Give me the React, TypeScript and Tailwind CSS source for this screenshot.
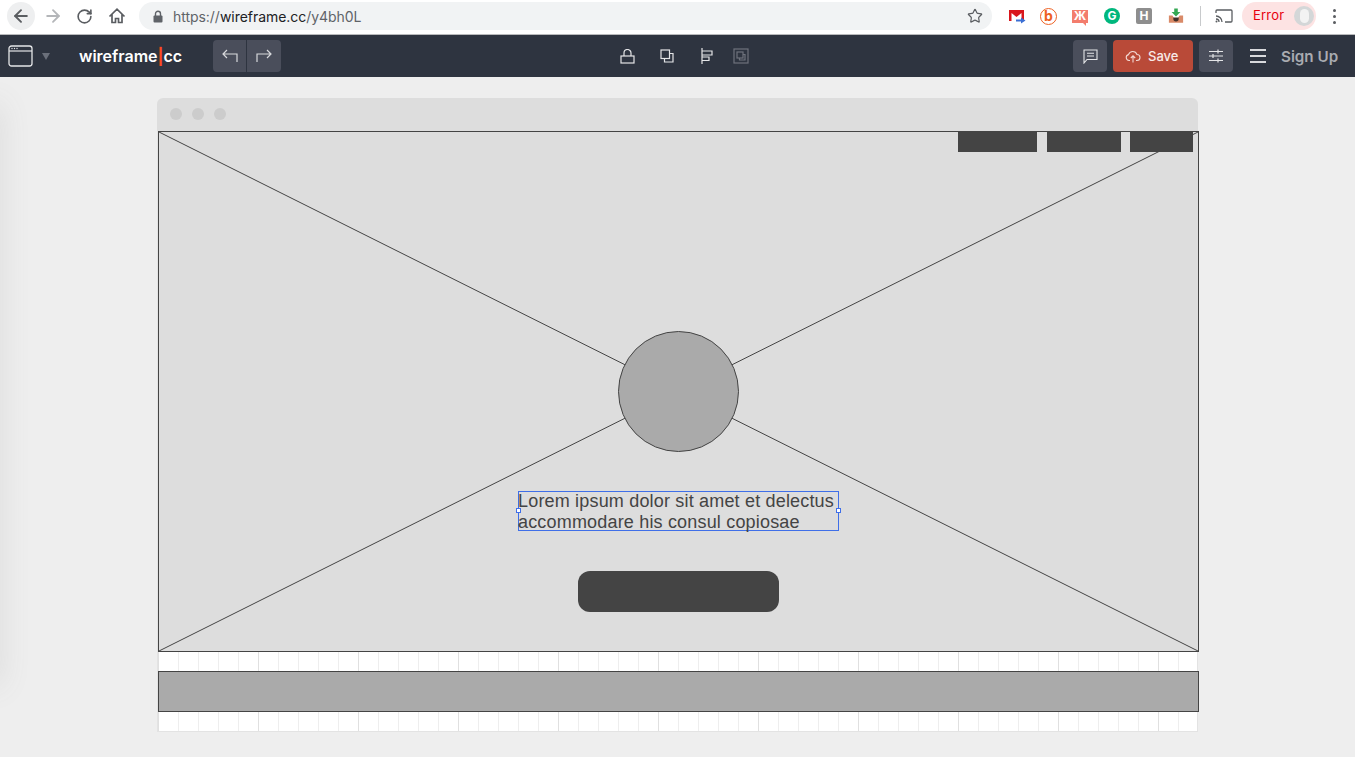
// App.tsx
import React from "react";
import { ArrowLeft, ArrowRight, RotateCw, Star } from "lucide-react";

const Divider = () => <div className="h-[20px] w-px bg-[#c8cacc]" />;

// 크롬 확장 아이콘
const ExtensionIcons = () => (
    <div className="flex items-center">
        <svg width="17" height="15" viewBox="0 0 17 15" className="ml-[17px]">
            <path d="M0 1h15v11H0z" fill="#d9161c" />
            <path d="M2.500 4l5 4 5-4v8h-10z" fill="#fff" />
            <path d="M7 10.500h5V8.500l4.500 3-4.500 3v-2H7z" fill="#3b6fd4" />
        </svg>
        <div className="ml-[14px] w-[17px] h-[17px] rounded-full border-[1.5px] border-[#ee6123] flex items-center justify-center text-[#ee6123] text-[14px] font-bold leading-none font-['Inter',sans-serif]">
            b
        </div>
        <div className="ml-[15px] w-[16px] h-[13px] bg-[#f37d6d] flex items-center justify-center text-white text-[12px] font-bold leading-none font-['Noto_Sans',sans-serif] relative">
            Ж
            <span className="absolute right-[2px] -bottom-[3px] w-0 h-0 border-l-[3px] border-l-transparent border-t-[3px] border-t-[#f37d6d]" />
        </div>
        <div className="ml-[16px] w-[16px] h-[16px] rounded-full bg-[#00b77d] flex items-center justify-center text-white text-[12px] font-bold leading-none font-['Inter',sans-serif]">
            G
        </div>
        <div className="ml-[16px] w-[16px] h-[16px] rounded-[2px] bg-[#8e8e8e] flex items-center justify-center text-white text-[12px] font-bold leading-none font-['Inter',sans-serif]">
            H
        </div>
        <svg width="16" height="17" viewBox="0 0 18 18" className="ml-[16px]">
            <path d="M7 0h4v4h3l-5 5-5-5h3z" fill="#34a853" />
            <path d="M1 8h4l2 3h4l2-3h4v8H1z" fill="#d98a68" />
            <path d="M6 10h6v1.500a3 3 0 0 1-6 0z" fill="#40302a" />
        </svg>
    </div>
);

const ChromeBar = () => (
    <div className="h-[35px] pb-[2px] bg-white border-b border-[#b9babc] flex items-center shrink-0 relative">
        <div className="ml-[7px] w-[28px] h-[28px] rounded-full bg-[#eeeff0] flex items-center justify-center">
            <ArrowLeft size={20} strokeWidth={2.3} className="text-[#5a5d61]" />
        </div>
        <ArrowRight size={20} strokeWidth={2.2} className="ml-[8px] text-[#b4b6b9]" />
        <RotateCw size={17} strokeWidth={2.3} className="ml-[13px] text-[#5a5d61]" />
        <svg width="18" height="18" viewBox="0 0 18 18" className="ml-[15px]">
            <path
                d="M1.500 9.500 9 2.200l7.500 7.300M4 7.500V15.500h3.500v-4h3v4H14V7.500"
                fill="none"
                stroke="#5a5d61"
                strokeWidth="1.700"
            />
        </svg>
        <div className="ml-[13px] w-[853px] h-[28px] rounded-full bg-[#f1f3f4] flex items-center pl-[14px] pr-[9px]">
            <svg width="10" height="13" viewBox="0 0 10 13">
                <path d="M2.500 6V3.800a2.500 2.500 0 0 1 5 0V6" fill="none" stroke="#5f6368" strokeWidth="1.400" />
                <rect x="0.500" y="5.500" width="9" height="7" rx="1" fill="#5f6368" />
            </svg>
            <span className="ml-[10px] text-[14px] tracking-[-0.04px] text-[#5f6368] font-['Inter',sans-serif]">
                https://<span className="text-[#202124]">wireframe.cc</span>/y4bh0L
            </span>
            <Star size={16} strokeWidth={1.8} className="ml-auto text-[#5a5d61]" />
        </div>
        <ExtensionIcons />
        <div className="ml-[16px]">
            <Divider />
        </div>
        <svg width="18" height="14" viewBox="0 0 18 14" className="ml-[14px]">
            <path
                d="M1 4V2a1 1 0 0 1 1-1h14a1 1 0 0 1 1 1v10a1 1 0 0 1-1 1h-6M1 7a6 6 0 0 1 6 6M1 10a3 3 0 0 1 3 3"
                fill="none"
                stroke="#5a5d61"
                strokeWidth="1.300"
            />
            <circle cx="1.500" cy="12.500" r="1" fill="#5a5d61" />
        </svg>
        <div className="ml-[9px] w-[74px] h-[28px] rounded-full bg-[#fde3e3] flex items-center pl-[11px]">
            <span className="text-[13px] tracking-[0.2px] text-[#e8000d] font-['Inter',sans-serif]">Error</span>
            <div className="ml-[10px] w-[20px] h-[20px] rounded-full bg-[#d4d7d8] flex items-center justify-center">
                <div className="w-[9px] h-[14px] rounded-full bg-[#f3f3f3]" />
            </div>
        </div>
        <div className="ml-[17px] flex flex-col gap-[3px]">
            <span className="w-[3px] h-[3px] rounded-full bg-[#5a5d61]" />
            <span className="w-[3px] h-[3px] rounded-full bg-[#5a5d61]" />
            <span className="w-[3px] h-[3px] rounded-full bg-[#5a5d61]" />
        </div>
    </div>
);

const Toolbar = () => (
    <div className="h-[42px] bg-[#2e3440] flex items-center shrink-0 font-['Inter',sans-serif]">
        <svg width="25" height="22" viewBox="0 0 25 22" className="ml-[8px]">
            <rect x="1" y="1" width="23" height="20" rx="2.500" fill="none" stroke="#e4e5e7" strokeWidth="1.300" />
            <path d="M1 6h23" stroke="#e4e5e7" strokeWidth="1.200" />
            <circle cx="4" cy="3.500" r="0.700" fill="#e4e5e7" />
            <circle cx="6.500" cy="3.500" r="0.700" fill="#e4e5e7" />
            <circle cx="9" cy="3.500" r="0.700" fill="#e4e5e7" />
        </svg>
        <span className="ml-[9px] w-0 h-0 border-l-[4px] border-r-[4px] border-t-[7px] border-l-transparent border-r-transparent border-t-[#6b707b]" />
        <div className="ml-[29px] w-[134px] text-white text-[16px] font-semibold leading-none">
            wireframe<span className="text-[#ff4a1f] font-bold">|</span>cc
        </div>
        <div className="h-[32px] w-[68px] rounded-[4px] bg-[#4a4e5b] flex">
            <div className="w-[34px] border-r border-[#2e3440] flex items-center justify-center">
                <svg width="16" height="14" viewBox="0 0 16 14" fill="none" stroke="#d8d9dc" strokeWidth="1.200">
                    <path d="M5 1 1 5l4 4M1 5h14v8" />
                </svg>
            </div>
            <div className="flex-1 flex items-center justify-center">
                <svg width="16" height="14" viewBox="0 0 16 14" fill="none" stroke="#d8d9dc" strokeWidth="1.200">
                    <path d="M11 1l4 4-4 4M15 5H1v8" />
                </svg>
            </div>
        </div>
        <svg width="15" height="15" viewBox="0 0 15 15" className="ml-[339px]" fill="none" stroke="#e4e5e7" strokeWidth="1.200">
            <rect x="1" y="7" width="13" height="7" />
            <path d="M4 7V4a3.500 3.500 0 0 1 7 0v3" />
        </svg>
        <svg width="14" height="14" viewBox="0 0 14 14" className="ml-[25px]" fill="none" stroke="#e4e5e7" strokeWidth="1.200">
            <rect x="1" y="1" width="8.500" height="8.500" />
            <path d="M9.500 4.500H13V13H4.500V9.500" />
        </svg>
        <svg width="13" height="16" viewBox="0 0 13 16" className="ml-[27px]" fill="none" stroke="#e4e5e7" strokeWidth="1.200">
            <path d="M1 0v16M1 3h10v4H1M1 9h7v3.500H1" />
        </svg>
        <svg width="16" height="16" viewBox="0 0 16 16" className="ml-[19px]" fill="none" stroke="#6e727c" strokeWidth="1.200">
            <rect x="1" y="1" width="14" height="14" />
            <rect x="4" y="4" width="6" height="6" />
            <path d="M10 6.500h2V12H6.500v-2" />
        </svg>
        <div className="ml-[324px] w-[34px] h-[32px] rounded-[4px] bg-[#4a4e5b] flex items-center justify-center">
            <svg width="15" height="15" viewBox="0 0 15 15" fill="none" stroke="#e4e5e7" strokeWidth="1.100">
                <path d="M1 1h13v9.500H4L1 14zM4 4.200h7M4 7h7" />
            </svg>
        </div>
        <div className="ml-[6px] w-[80px] h-[32px] rounded-[4px] bg-[#b94a38] flex items-center pl-[12px] text-[#f8ebe8] text-[13px] font-medium">
            <svg width="16" height="13" viewBox="0 0 16 13" fill="none" stroke="#f3d8d3" strokeWidth="1.100">
                <path d="M5 10.500H4A3 3 0 0 1 3.500 4.600 4.500 4.500 0 0 1 12 4.500a3 3 0 0 1 0 6h-1M8 12.500V6M5.800 8 8 5.800 10.200 8" />
            </svg>
            <span className="ml-[7px] pt-[1px]">Save</span>
        </div>
        <div className="ml-[6px] w-[34px] h-[32px] rounded-[4px] bg-[#4a4e5b] flex items-center justify-center">
            <svg width="14" height="14" viewBox="0 0 14 14" fill="none" stroke="#e4e5e7" strokeWidth="1.200">
                <path d="M0 2.500h14M0 7h14M0 11.500h14M9 0.500v4M4 5v4M9 9.500v4" />
            </svg>
        </div>
        <div className="ml-[17px] w-[16px] flex flex-col gap-[4px]">
            <span className="h-[2px] bg-[#d8d9dc]" />
            <span className="h-[2px] bg-[#d8d9dc]" />
            <span className="h-[2px] bg-[#d8d9dc]" />
        </div>
        <span className="ml-[15px] pt-[1px] text-[15.2px] font-semibold text-[#a9abb0] leading-none">Sign Up</span>
    </div>
);

// 와이어프레임 캔버스 (요소 위치 자체가 내용)
const WireframeCanvas = () => (
    <div className="ml-[157px] mt-[21px] w-[1041px]">
        <div className="h-[33px] pb-[1px] rounded-t-[6px] bg-[#dddddd] flex items-center gap-[10px] pl-[13px]">
            <span className="w-[12px] h-[12px] rounded-full bg-[#cccccc]" />
            <span className="w-[12px] h-[12px] rounded-full bg-[#cccccc]" />
            <span className="w-[12px] h-[12px] rounded-full bg-[#cccccc]" />
        </div>
        <div className="relative h-[601px] border-x border-b border-[#e3e3e3] bg-white bg-[linear-gradient(to_right,#e0e0e0_1px,transparent_1px),linear-gradient(to_right,#eeeeee_1px,transparent_1px)] bg-[size:100px_100px,20px_20px]">
            <div className="absolute left-0 top-0 w-[1041px] h-[521px] bg-[#dddddd] border border-[#444444]">
                <svg width="1039" height="519" viewBox="0 0 1039 519" className="block">
                    <path d="M0 0 1039 519M1039 0 0 519" stroke="#444444" strokeWidth="1" fill="none" />
                </svg>
            </div>
            <div className="absolute left-[800px] top-0 w-[79px] h-[21px] bg-[#444444]" />
            <div className="absolute left-[889px] top-0 w-[74px] h-[21px] bg-[#444444]" />
            <div className="absolute left-[972px] top-0 w-[63px] h-[21px] bg-[#444444]" />
            <div className="absolute left-[460px] top-[200px] w-[121px] h-[121px] rounded-full bg-[#aaaaaa] border border-[#444444]" />
            <div className="absolute left-[360px] top-[360px] w-[321px] h-[40px] border border-[#3f6fe8] text-[18px] leading-[21px] tracking-[0.18px] text-[#444444] font-['Liberation_Sans',Arial,sans-serif] whitespace-nowrap">
                <div className="-mt-px -ml-px">Lorem ipsum dolor sit amet et delectus</div>
                <div className="-ml-px">accommodare his consul copiosae</div>
                <span className="absolute -left-[3px] top-[16px] w-[5px] h-[5px] bg-white border border-[#3f6fe8]" />
                <span className="absolute -right-[3px] top-[16px] w-[5px] h-[5px] bg-white border border-[#3f6fe8]" />
            </div>
            <div className="absolute left-[420px] top-[440px] w-[201px] h-[41px] rounded-[12px] bg-[#444444]" />
            <div className="absolute left-0 top-[540px] w-[1041px] h-[41px] bg-[#aaaaaa] border border-[#444444]" />
        </div>
    </div>
);

const App: React.FC = () => {
    return (
        <div className="relative w-[1355px] h-[757px] overflow-hidden bg-[#eeeeee] flex flex-col">
            <ChromeBar />
            <Toolbar />
            {/* 왼쪽 가장자리 그림자 */}
            <div className="absolute -left-[20px] top-[105px] w-[20px] h-[580px] shadow-[0_0_30px_#d8d8d8]" />
            <div className="relative">
                <WireframeCanvas />
            </div>
        </div>
    );
};

export default App;
